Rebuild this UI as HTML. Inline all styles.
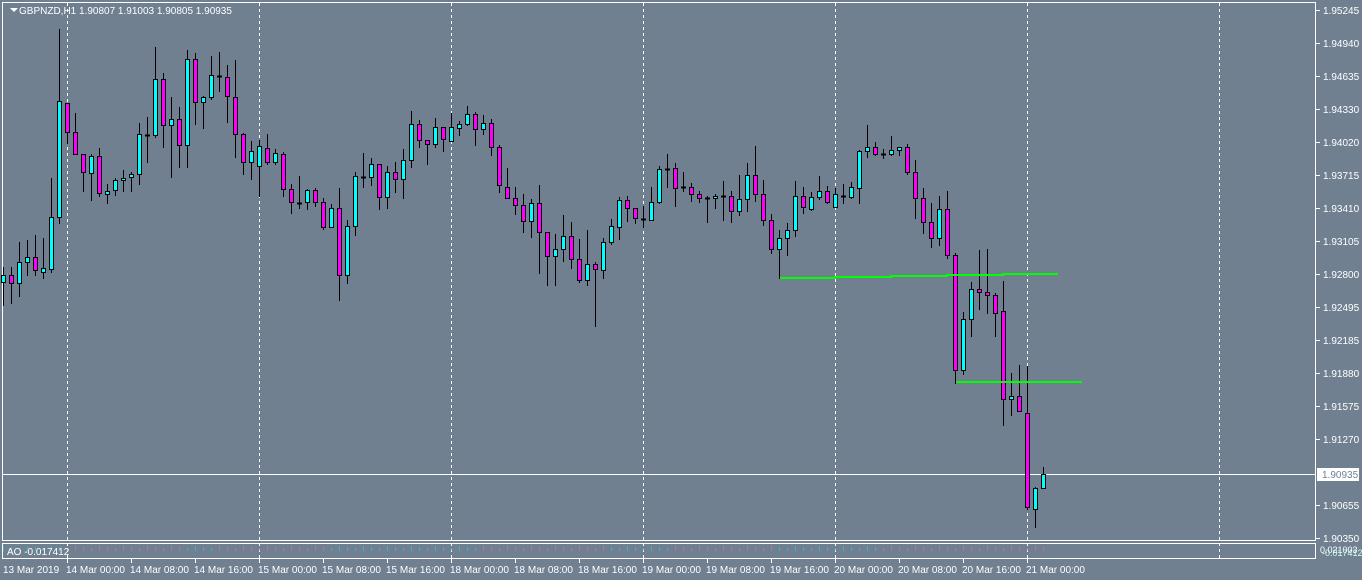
<!DOCTYPE html>
<html><head><meta charset="utf-8"><style>
html,body{margin:0;padding:0;background:#708090;width:1362px;height:580px;overflow:hidden}
svg{display:block}
text{font-family:"Liberation Sans",sans-serif;font-size:10px;fill:#fff}
</style></head><body>
<svg id="s" width="1362" height="580" xmlns="http://www.w3.org/2000/svg">
<rect width="1362" height="580" fill="#708090"/>
<g stroke="#fff" fill="none" stroke-width="1">
<rect x="2.5" y="2.5" width="1313" height="538"/>
<rect x="2.5" y="543.5" width="1313" height="15"/>
<line x1="2" y1="474.5" x2="1316" y2="474.5"/>
</g>
<g stroke="#fff" stroke-dasharray="3,3" stroke-width="1">
<line x1="67.5" y1="3" x2="67.5" y2="559"/>
<line x1="259.5" y1="3" x2="259.5" y2="559"/>
<line x1="451.5" y1="3" x2="451.5" y2="559"/>
<line x1="643.5" y1="3" x2="643.5" y2="559"/>
<line x1="835.5" y1="3" x2="835.5" y2="559"/>
<line x1="1027.5" y1="3" x2="1027.5" y2="559"/>
<line x1="1219.5" y1="3" x2="1219.5" y2="559"/>
</g>
<g id="c"></g>
<g stroke="#00ff00" stroke-width="2" fill="none">
<polyline points="780,278 835,278 835,277 891,277 891,276 947,276 947,275 1003,275 1003,274 1058,274"/>
<line x1="956" y1="382" x2="1082" y2="382"/>
</g>
<g id="ao"></g>
<path d="M10 8 L18 8 L14 12 Z" fill="#fff"/>
<text x="19" y="14">GBPNZD,H1  1.90807 1.91003 1.90805 1.90935</text>
<g stroke="#fff">
<line x1="1316" y1="10.5" x2="1320" y2="10.5"/><line x1="1316" y1="43.5" x2="1320" y2="43.5"/><line x1="1316" y1="76.5" x2="1320" y2="76.5"/><line x1="1316" y1="109.5" x2="1320" y2="109.5"/><line x1="1316" y1="142.5" x2="1320" y2="142.5"/><line x1="1316" y1="175.5" x2="1320" y2="175.5"/><line x1="1316" y1="208.5" x2="1320" y2="208.5"/><line x1="1316" y1="241.5" x2="1320" y2="241.5"/><line x1="1316" y1="274.5" x2="1320" y2="274.5"/><line x1="1316" y1="307.5" x2="1320" y2="307.5"/><line x1="1316" y1="340.5" x2="1320" y2="340.5"/><line x1="1316" y1="373.5" x2="1320" y2="373.5"/><line x1="1316" y1="406.5" x2="1320" y2="406.5"/><line x1="1316" y1="439.5" x2="1320" y2="439.5"/><line x1="1316" y1="505.5" x2="1320" y2="505.5"/><line x1="1316" y1="538.5" x2="1320" y2="538.5"/>
</g>
<g>
<text x="1323" y="14">1.95245</text><text x="1323" y="47">1.94940</text><text x="1323" y="80">1.94635</text><text x="1323" y="113">1.94330</text><text x="1323" y="146">1.94020</text><text x="1323" y="179">1.93715</text><text x="1323" y="212">1.93410</text><text x="1323" y="245">1.93105</text><text x="1323" y="278">1.92800</text><text x="1323" y="311">1.92495</text><text x="1323" y="344">1.92185</text><text x="1323" y="377">1.91880</text><text x="1323" y="410">1.91575</text><text x="1323" y="443">1.91270</text><text x="1323" y="509">1.90655</text><text x="1323" y="542">1.90350</text>
</g>
<rect x="1317" y="468" width="42" height="13" fill="#fff"/>
<text x="1322" y="478" style="fill:#708090">1.90935</text>
<text x="1320" y="553" style="font-size:9px">0.021003</text>
<text x="1322" y="556" style="font-size:9px;fill:#cfe">-0.017412</text>
<text x="7" y="555">AO -0.017412</text>
<g stroke="#fff">
<line x1="67.5" y1="559" x2="67.5" y2="563"/><line x1="131.5" y1="559" x2="131.5" y2="563"/><line x1="195.5" y1="559" x2="195.5" y2="563"/><line x1="259.5" y1="559" x2="259.5" y2="563"/><line x1="323.5" y1="559" x2="323.5" y2="563"/><line x1="387.5" y1="559" x2="387.5" y2="563"/><line x1="451.5" y1="559" x2="451.5" y2="563"/><line x1="515.5" y1="559" x2="515.5" y2="563"/><line x1="579.5" y1="559" x2="579.5" y2="563"/><line x1="643.5" y1="559" x2="643.5" y2="563"/><line x1="707.5" y1="559" x2="707.5" y2="563"/><line x1="771.5" y1="559" x2="771.5" y2="563"/><line x1="835.5" y1="559" x2="835.5" y2="563"/><line x1="899.5" y1="559" x2="899.5" y2="563"/><line x1="963.5" y1="559" x2="963.5" y2="563"/><line x1="1027.5" y1="559" x2="1027.5" y2="563"/>
</g>
<g>
<text x="3" y="573">13 Mar 2019</text><text x="66" y="573">14 Mar 00:00</text><text x="130" y="573">14 Mar 08:00</text><text x="194" y="573">14 Mar 16:00</text><text x="258" y="573">15 Mar 00:00</text><text x="322" y="573">15 Mar 08:00</text><text x="386" y="573">15 Mar 16:00</text><text x="450" y="573">18 Mar 00:00</text><text x="514" y="573">18 Mar 08:00</text><text x="578" y="573">18 Mar 16:00</text><text x="642" y="573">19 Mar 00:00</text><text x="706" y="573">19 Mar 08:00</text><text x="770" y="573">19 Mar 16:00</text><text x="834" y="573">20 Mar 00:00</text><text x="898" y="573">20 Mar 08:00</text><text x="962" y="573">20 Mar 16:00</text><text x="1026" y="573">21 Mar 00:00</text>
</g>
</svg>
<script>
// [high, bodyTop, bodyBottom, low, type] type: 1 cyan, 2 magenta, 0 doji
var d=[
[267,275,282,305,1],[267,275,283,303,2],[242,262,283,296,1],[240,257,262,275,1],[235,257,270,275,2],[238,268,272,278,1],[178,217,269,272,1],[29,101,217,223,1],[103,103,132,143,2],[113,132,154,154,2],
[154,154,172,191,2],[154,156,173,200,1],[148,156,193,196,2],[184,191,194,203,1],[178,180,190,195,1],[170,178,180,191,1],[172,174,177,191,1],[123,134,174,184,1],[117,135,135,162,0],[47,79,135,137,1],
[73,79,125,147,2],[97,119,125,177,1],[107,119,145,167,2],[50,59,145,167,1],[53,59,102,124,2],[96,97,102,128,1],[56,75,97,99,1],[52,76,76,91,0],[65,77,96,122,2],[60,97,134,157,2],
[133,134,162,174,2],[141,151,162,179,1],[140,146,166,196,1],[134,148,162,164,2],[149,153,162,164,1],[152,154,189,196,2],[184,189,202,213,2],[176,203,203,208,0],[189,190,202,209,1],[188,190,202,206,2],
[198,202,227,229,2],[204,208,227,227,1],[188,208,275,300,2],[220,226,275,283,1],[172,176,226,235,1],[153,177,177,187,0],[158,164,177,185,1],[164,164,197,209,2],[166,172,197,208,1],[162,172,179,192,2],
[149,160,179,198,1],[111,124,160,167,1],[120,124,140,147,2],[140,140,144,164,2],[118,127,144,147,1],[127,127,139,151,2],[113,127,141,141,1],[121,124,128,135,1],[106,114,124,125,1],[112,114,129,145,2],
[115,123,129,134,1],[119,123,147,155,2],[145,147,185,192,2],[168,187,198,198,2],[187,198,205,214,2],[194,205,221,232,2],[199,203,221,237,1],[185,203,232,273,2],[232,232,256,285,2],[234,249,256,285,1],
[215,236,249,261,1],[222,236,259,268,2],[239,259,280,282,2],[230,264,280,285,1],[262,264,269,326,2],[238,242,270,278,1],[219,226,242,244,1],[197,200,227,239,1],[196,200,208,221,2],[208,208,218,223,2],
[206,219,219,227,0],[187,202,220,220,1],[166,169,202,203,1],[154,169,169,187,0],[163,168,188,206,2],[172,187,187,191,0],[183,187,194,201,2],[191,194,198,202,2],[196,198,198,222,0],[194,196,198,208,1],
[181,196,196,220,0],[191,196,211,222,2],[175,199,211,215,1],[163,175,199,211,1],[146,175,194,201,2],[180,194,220,225,2],[214,220,249,253,2],[230,238,249,278,1],[223,230,238,255,1],[181,196,230,236,1],
[187,196,207,213,2],[192,197,209,210,1],[176,191,197,199,1],[186,191,202,203,2],[188,194,207,207,1],[184,196,196,203,0],[182,187,197,198,1],[150,151,188,203,1],[125,147,151,157,1],[142,147,154,155,2],
[149,154,154,158,0],[136,150,154,155,1],[147,147,150,155,1],[144,147,172,174,2],[160,172,198,218,2],[188,198,222,233,2],[203,222,238,247,2],[196,209,238,245,1],[191,209,255,258,2],[253,255,370,383,2],
[312,319,370,374,1],[282,289,319,336,1],[250,289,292,309,2],[249,292,295,313,2],[293,295,313,336,2],[281,311,399,425,2],[373,396,399,415,1],[365,396,411,411,2],[366,413,507,509,2],[487,488,509,527,1],
[467,474,488,488,1]
];
var ns="http://www.w3.org/2000/svg",g=document.getElementById("c"),h="";
d.forEach(function(c,i){
var x=3+8*i;
h+='<line x1="'+(x+0.5)+'" y1="'+c[0]+'" x2="'+(x+0.5)+'" y2="'+(c[3]+1)+'" stroke="#000"/>';
if(c[4]===0||c[2]-c[1]<1){h+='<line x1="'+(x-2)+'" y1="'+(c[1]+0.5)+'" x2="'+(x+3)+'" y2="'+(c[1]+0.5)+'" stroke="#000" stroke-width="2"/>';}
else{h+='<rect x="'+(x-1.5)+'" y="'+(c[1]+0.5)+'" width="4" height="'+(c[2]-c[1])+'" fill="'+(c[4]==1?'#00ffff':'#ff00ff')+'" stroke="#000"/>';}
});
g.innerHTML=h;
var a="";
for(var i=0;i<131;i++){var x=3+8*i;var col=(i<8||(i>22&&i<27)||(i>40&&i<60)||(i>75&&i<84)||(i>96&&i<110))?'#00e5e5':'#e070b0';var t=546+(i%3);a+='<line x1="'+(x+0.5)+'" y1="'+t+'" x2="'+(x+0.5)+'" y2="551" stroke="'+col+'" stroke-opacity="0.6"/>';}
document.getElementById("ao").innerHTML=a;
</script>
</body></html>
